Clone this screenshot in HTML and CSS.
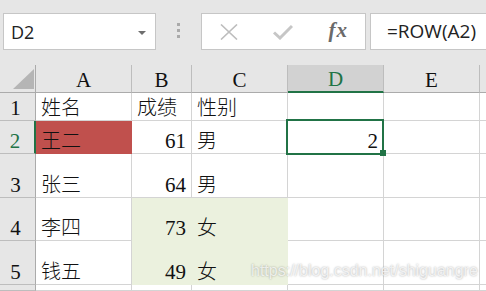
FILE: index.html
```html
<!DOCTYPE html>
<html lang="zh-CN">
<head>
    <meta charset="UTF-8">
    <title>ROW</title>
    <link rel="stylesheet" href="styles.css">
</head>
<body>

<div class="toolbar">
    <div class="namebox">
        <span>D2</span>
        <svg class="caret" width="8" height="4" viewBox="0 0 8 4"><path d="M0 0H8L4 4Z" fill="#6e6e6e"/></svg>
    </div>
    <div class="grip"><i></i><i></i><i></i></div>
    <div class="fx-buttons">
        <span class="slot">
            <svg width="18" height="16" viewBox="0 0 18 16"><path d="M1 0.5L17 15.5M17 0.5L1 15.5" stroke="#bdbdbd" stroke-width="1.6" fill="none"/></svg>
        </span>
        <span class="slot">
            <svg width="20" height="16" viewBox="0 0 20 16"><path d="M1 8.5L7 14L19 2" stroke="#c6c6c6" stroke-width="3" fill="none"/></svg>
        </span>
        <span class="slot fx"><i>f</i><i>x</i></span>
    </div>
    <div class="formula">=ROW(A2)</div>
</div>

<div class="sheet">
    <div class="corner">
        <svg width="21" height="20" viewBox="0 0 21 20"><path d="M21 0V20H0Z" fill="#b5b5b5"/></svg>
    </div>
    <div class="hd">A</div>
    <div class="hd">B</div>
    <div class="hd">C</div>
    <div class="hd sel-col">D</div>
    <div class="hd">E</div>
    <div class="hd"></div>

    <div class="rh">1</div>
    <div class="c">姓名</div>
    <div class="c">成绩</div>
    <div class="c">性别</div>
    <div class="c"></div>
    <div class="c"></div>
    <div class="c"></div>

    <div class="rh sel-row">2</div>
    <div class="c red">王二</div>
    <div class="c num">61</div>
    <div class="c">男</div>
    <div class="c num active">2</div>
    <div class="c"></div>
    <div class="c"></div>

    <div class="rh">3</div>
    <div class="c">张三</div>
    <div class="c num">64</div>
    <div class="c">男</div>
    <div class="c"></div>
    <div class="c"></div>
    <div class="c"></div>

    <div class="rh">4</div>
    <div class="c">李四</div>
    <div class="c num green">73</div>
    <div class="c green">女</div>
    <div class="c"></div>
    <div class="c"></div>
    <div class="c"></div>

    <div class="rh">5</div>
    <div class="c">钱五</div>
    <div class="c num green">49</div>
    <div class="c green">女</div>
    <div class="c"></div>
    <div class="c"></div>
    <div class="c"></div>

    <div class="rh"></div>
    <div class="c"></div>
    <div class="c"></div>
    <div class="c"></div>
    <div class="c"></div>
    <div class="c"></div>
    <div class="c"></div>
</div>

<div class="watermark">https://blog.csdn.net/shiguangre</div>

</body>
</html>
```

FILE: styles.css
```css
body {
    margin: 0;
    width: 486px;
    height: 291px;
    overflow: hidden;
    background: #e6e6e6;
    position: relative;
}

/* formula bar */
.toolbar {
    height: 65px;
    box-sizing: border-box;
    padding-top: 13px;
    display: flex;
    align-items: flex-start;
}
.namebox {
    margin-left: 3px;
    width: 153px;
    height: 37px;
    box-sizing: border-box;
    border: 1px solid #c6c6c6;
    background: #fff;
    display: flex;
    align-items: center;
    justify-content: space-between;
    padding: 0 9px 0 7px;
    font-family: "Open Sans", sans-serif;
    font-size: 18px;
    color: #222;
}
.caret {
    margin-top: 2px;
}
.grip {
    margin-left: 21px;
    margin-top: 10px;
    display: flex;
    flex-direction: column;
    gap: 3px;
}
.grip i {
    display: block;
    width: 3px;
    height: 3px;
    background: #aaa;
}
.fx-buttons {
    margin-left: 21px;
    width: 165px;
    height: 37px;
    box-sizing: border-box;
    border: 1px solid #c6c6c6;
    background: #fff;
    display: flex;
}
.slot {
    flex: 1;
    display: flex;
    align-items: center;
    justify-content: center;
}
.fx {
    font-family: "Liberation Serif", serif;
    font-size: 21px;
    color: #6a6a6a;
    font-weight: bold;
    padding-bottom: 2px;
}
.fx i {
    font-style: italic;
}
.fx i + i {
    margin-left: 1px;
}
.formula {
    margin-left: 4px;
    flex: 1;
    height: 37px;
    box-sizing: border-box;
    border: 1px solid #c6c6c6;
    border-right: none;
    background: #fff;
    padding-left: 16px;
    line-height: 35px;
    font-family: "Open Sans", sans-serif;
    font-size: 19px;
    color: #222;
    white-space: nowrap;
}

/* sheet grid */
.sheet {
    display: grid;
    grid-template-columns: 36px 96px 60px 96px 96px 96px 1fr;
    grid-template-rows: 28px 28px 33px 44px 43px 44px 1fr;
    height: 226px;
    font-family: "Liberation Serif", "Noto Sans CJK SC", serif;
    font-size: 20px;
    line-height: 24px;
    color: #111;
}
.corner,
.hd,
.rh {
    background: #e6e6e6;
    box-sizing: border-box;
    display: flex;
    align-items: flex-end;
    justify-content: center;
}
.corner {
    border-right: 1px solid #ababab;
    border-bottom: 1px solid #ababab;
    align-items: center;
    padding-left: 12px;
}
.hd {
    border-right: 1px solid #bdbdbd;
    border-bottom: 1px solid #ababab;
    font-size: 21px;
}
.hd.sel-col {
    background: #d2d2d2;
    border-bottom: 2px solid #217346;
    color: #217346;
}
.rh {
    border-right: 1px solid #ababab;
    border-bottom: 1px solid #bdbdbd;
    padding-right: 4px;
    font-size: 21px;
}
.rh.sel-row {
    border-right: 2px solid #217346;
    color: #217346;
}
.c {
    background: #fff;
    box-sizing: border-box;
    border-right: 1px solid #d4d4d4;
    border-bottom: 1px solid #d4d4d4;
    display: flex;
    align-items: flex-end;
    padding: 0 4px 0 5px;
    white-space: nowrap;
    font-weight: 300;
}
.c.num {
    justify-content: flex-end;
    padding-right: 5px;
    font-size: 21px;
}
.c.red {
    background: #c0504d;
    border-color: #c0504d;
}
.c.green {
    background: #ebf1de;
    border-color: #ebf1de;
}
.c.active {
    position: relative;
}
.c.active::after {
    content: "";
    position: absolute;
    left: -2px;
    top: -2px;
    width: 98px;
    height: 36px;
    box-sizing: border-box;
    border: 2px solid #217346;
}
.c.active::before {
    content: "";
    position: absolute;
    left: 92px;
    top: 29px;
    width: 6px;
    height: 6px;
    background: #217346;
    z-index: 1;
}

.watermark {
    position: absolute;
    left: 251px;
    top: 262px;
    font-family: "Liberation Sans", sans-serif;
    font-size: 16px;
    color: rgba(255, 255, 255, 0.75);
    text-shadow: 0 0 2px rgba(0, 0, 0, 0.35);
    white-space: nowrap;
}
```
